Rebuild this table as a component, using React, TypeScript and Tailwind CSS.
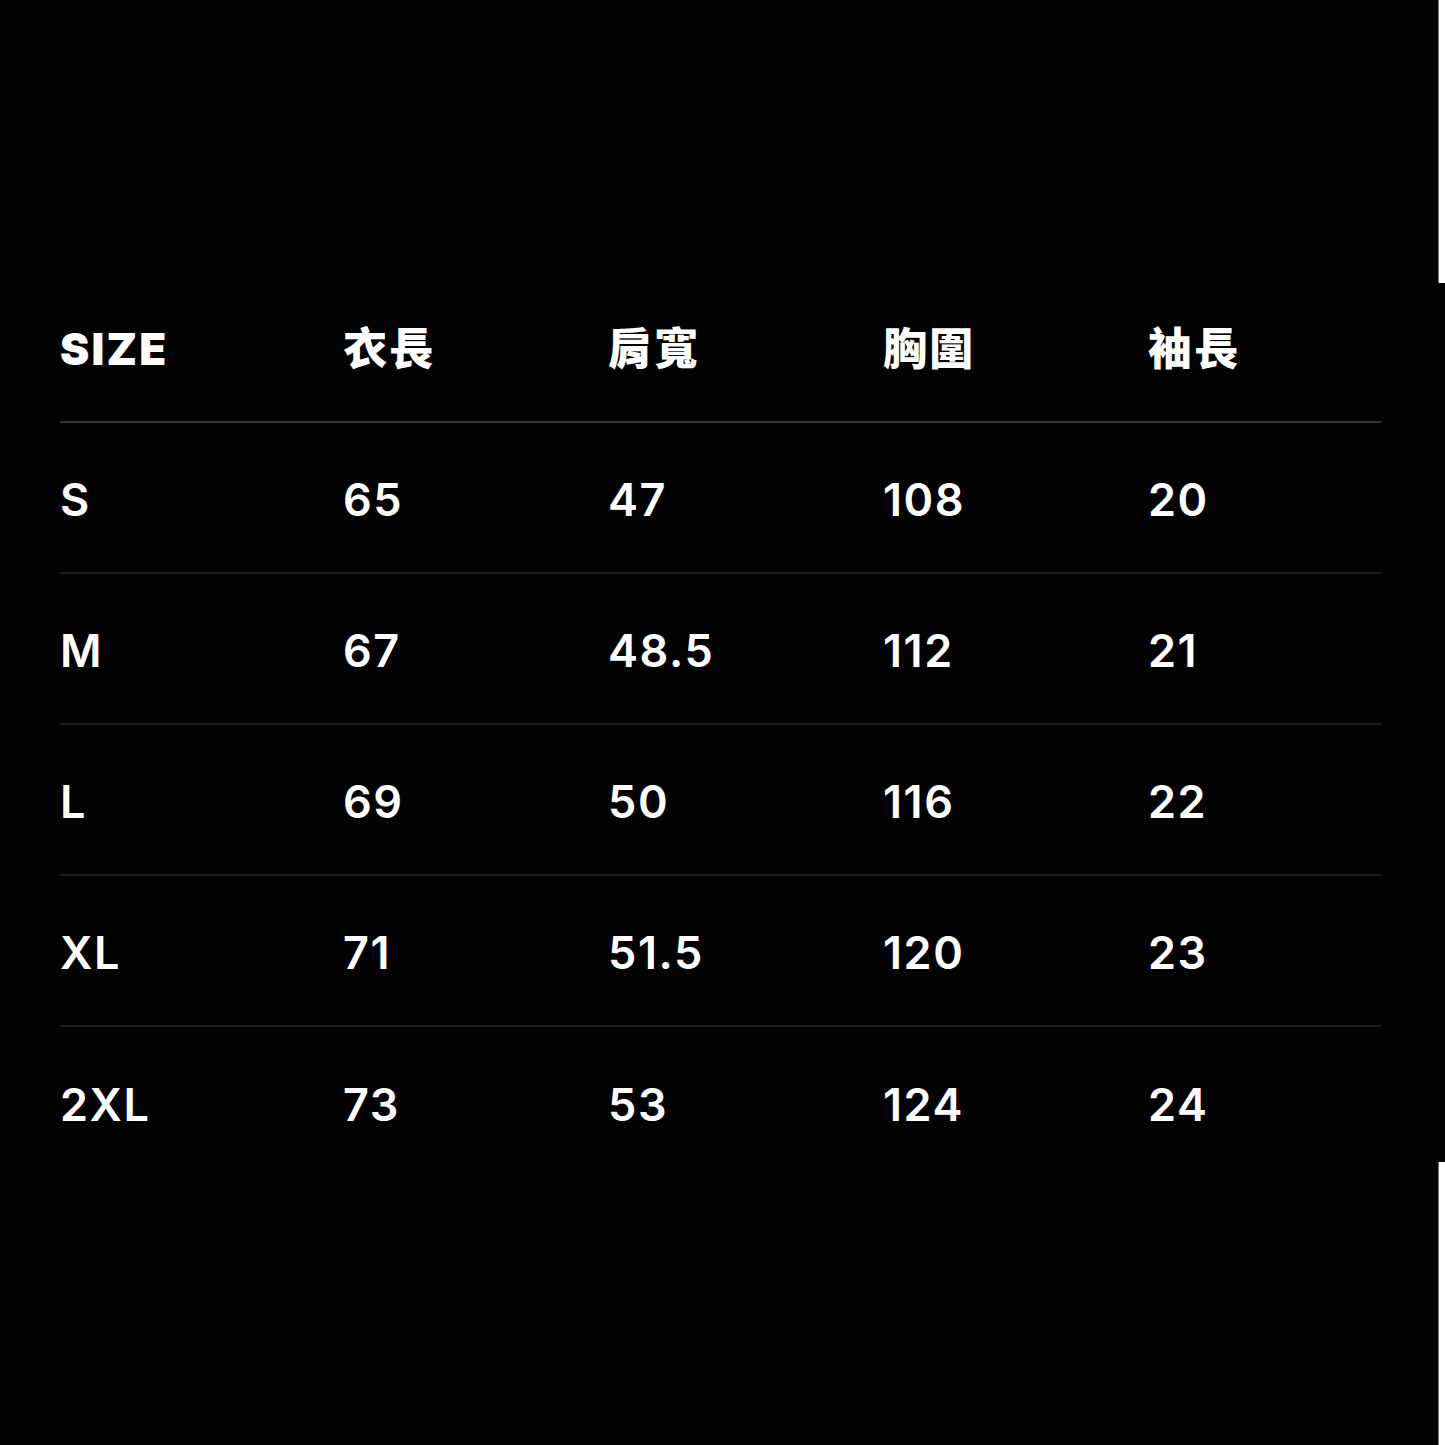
const HEADERS = ['SIZE', '衣長', '肩寬', '胸圍', '袖長']

const ROWS = [
  ['S', '65', '47', '108', '20'],
  ['M', '67', '48.5', '112', '21'],
  ['L', '69', '50', '116', '22'],
  ['XL', '71', '51.5', '120', '23'],
  ['2XL', '73', '53', '124', '24'],
]

const cols = 'grid grid-cols-[283px_265px_275px_265px_1fr]'

export default function App() {
  return (
    <div className="flex w-[1445px] h-[1445px] bg-black overflow-hidden">
      <main className="w-[1438px] h-full bg-[#030303] pt-[276px] pl-[60px]">
        <div className="w-[1321px] font-['Inter','Noto_Sans_CJK_TC',sans-serif] text-white">
          <div className={`${cols} h-[147px] items-center border-b-2 border-[#333333]`}>
            {HEADERS.map(h => (
              <span key={h} className="text-[44px] leading-none font-black tracking-[0.05em]">
                {h}
              </span>
            ))}
          </div>
          {ROWS.map((row, i) => (
            <div
              key={row[0]}
              className={`${cols} h-[151px] pt-[3px] items-center ${i < ROWS.length - 1 ? 'border-b-2 border-[#1c1c1c]' : ''}`}
            >
              {row.map((cell, j) => (
                <span key={j} className="text-[45px] leading-none font-semibold tracking-[0.035em]">
                  {cell}
                </span>
              ))}
            </div>
          ))}
        </div>
      </main>
      <div className="w-[7px] h-full flex flex-col">
        <div className="h-[283px] bg-white border-l border-[#777777]" />
        <div className="flex-1 bg-[#030303]" />
        <div className="h-[283px] bg-white border-l border-[#777777]" />
      </div>
    </div>
  )
}
